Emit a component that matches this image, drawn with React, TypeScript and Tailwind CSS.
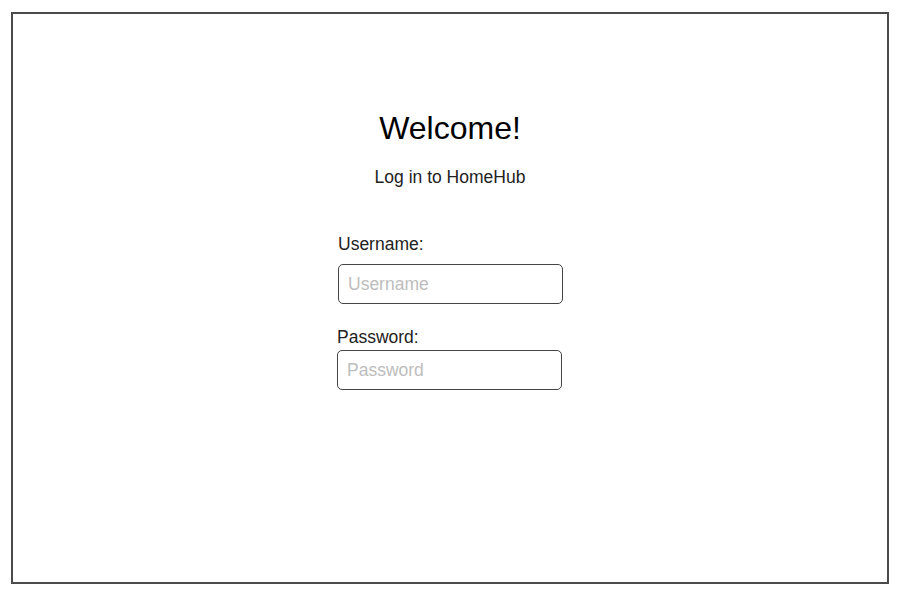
export default function App() {
    return (
        <div className="w-[898px] h-[593px] bg-white pt-[12px] pl-[11px]" style={{ fontFamily: '"Liberation Sans", Arial, sans-serif' }}>
            <div className="w-[878px] h-[572px] border-2 border-[#4b4b4b] flex flex-col items-center pt-[96px]">
                <h1 className="text-[32px] leading-[37px] text-black">Welcome!</h1>
                <p className="mt-[20px] text-[17.5px] leading-[20px] text-[#222]">Log in to HomeHub</p>

                <form className="mt-[47px] w-[226px] flex flex-col">
                    <div className="flex flex-col ml-px">
                        <label className="text-[17.5px] leading-[20px] text-[#222]">Username:</label>
                        <input
                            type="text"
                            placeholder="Username"
                            className="mt-[10px] w-[225px] h-[40px] border border-[#444] rounded-[5px] px-[9px] text-[17.5px] outline-none placeholder:text-[#bdbdbd]"
                        />
                    </div>
                    <div className="flex flex-col mt-[23px]">
                        <label className="text-[17.5px] leading-[20px] text-[#222]">Password:</label>
                        <input
                            type="password"
                            placeholder="Password"
                            className="mt-[3px] w-[225px] h-[40px] border border-[#444] rounded-[5px] px-[9px] text-[17.5px] outline-none placeholder:text-[#bdbdbd]"
                        />
                    </div>
                </form>
            </div>
        </div>
    );
}
